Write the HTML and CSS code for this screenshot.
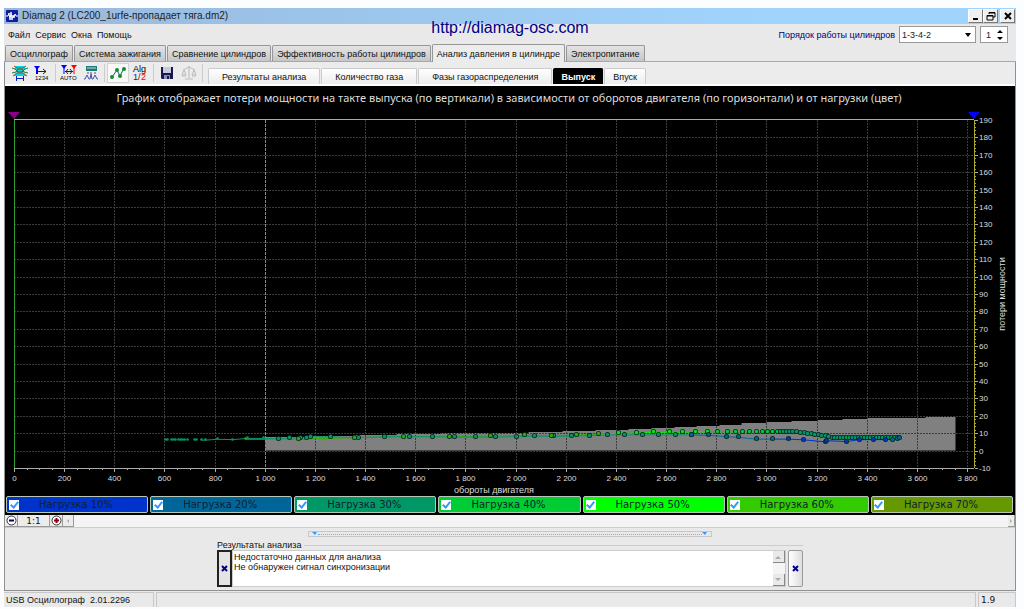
FILE: index.html
```html
<!DOCTYPE html>
<html lang="ru">
<head>
    <meta charset="utf-8">
    <title>Diamag 2</title>
    <link rel="stylesheet" href="styles.css">
</head>
<body>
    <div class="window">
        <header class="titlebar">
            <svg class="app-icon" width="12" height="12" viewBox="0 0 12 12">
                <rect width="12" height="12" rx="1" fill="#10209a"/>
                <path d="M0 6h2l1-3 1 7 1-8 1 8 1-5 1 3 1-4 1 2h2" fill="none" stroke="#fff" stroke-width="1"/>
            </svg>
            <span class="title">Diamag 2 (LC200_1urfe-пропадает тяга.dm2)</span>
            <div class="win-buttons">
                <button aria-label="Свернуть"><svg width="10" height="10"><path d="M2 8h5" stroke="#000" stroke-width="2"/></svg></button>
                <button aria-label="Восстановить"><svg width="10" height="10"><path d="M3 3V1.500h6V6H7M3 2h6M1 4.500h6V9H1z M1 5h6" fill="none" stroke="#000"/></svg></button>
                <button class="close" aria-label="Закрыть"><svg width="10" height="10"><path d="M2 2l6 6M8 2l-6 6" stroke="#000" stroke-width="2"/></svg></button>
            </div>
            <a class="site" href="http://diamag-osc.com">http://diamag-osc.com</a>
        </header>

        <div class="menu-row">
            <nav class="menu">
                <button>Файл</button>
                <button>Сервис</button>
                <button>Окна</button>
                <button>Помощь</button>
            </nav>
            <div class="order">
                <label for="order">Порядок работы цилиндров</label>
                <span class="select-box">
                    <select id="order"><option>1-3-4-2</option></select>
                    <svg width="6" height="4"><path d="M0 0h6L3 4z"/></svg>
                </span>
                <span class="spin-box">
                    <input type="text" value="1" aria-label="Номер цилиндра">
                    <svg width="8" height="12"><path d="M1 4h6L4 1zM1 8h6L4 11z"/></svg>
                </span>
            </div>
        </div>

        <nav class="tabs">
            <button>Осциллограф</button>
            <button>Система зажигания</button>
            <button>Сравнение цилиндров</button>
            <button>Эффективность работы цилиндров</button>
            <button class="active">Анализ давления в цилиндре</button>
            <button>Электропитание</button>
        </nav>

        <main class="page">
            <div class="toolbar">
                <button aria-label="Развёртка">
                    <svg width="16" height="16" viewBox="0 0 16 16">
                        <path d="M3 1h10v3l-2 3 4 4H1l4-4-2-3z" fill="#00d8e0"/>
                        <path d="M0 3l3 1 3 3h4l3-3 3-1M0 8l4-1 2-3h4l2 3 4 1" fill="none" stroke="#207048"/>
                        <path d="M1 11l4-3h6l4 3M2 1l3 2h6l3-2" fill="none" stroke="#d04020"/>
                        <path d="M4 13.500h8M4.500 11v5M11.500 11v5" stroke="#0020c0"/>
                    </svg>
                </button>
                <button aria-label="Маркер 1234">
                    <svg width="16" height="16" viewBox="0 0 16 16">
                        <path d="M0 1h6L3 5z" fill="#00f"/><path d="M3 2v7" stroke="#00f" stroke-width="2"/>
                        <path d="M4 6.500h8M9 4l3 2.500L9 9" fill="none" stroke="#222"/>
                        <text x="1" y="15" font-size="6">1234</text>
                    </svg>
                </button>
                <i class="sep"></i>
                <button aria-label="Авто">
                    <svg width="18" height="16" viewBox="0 0 18 16">
                        <path d="M1 0h6L4 4z" fill="#00f"/><path d="M4 1v8" stroke="#00f"/>
                        <path d="M11 0h6l-3 4z" fill="#f00"/><path d="M14 1v8" stroke="#f00"/>
                        <path d="M5 6.500h8M8 4L6 6.500 8 9M10 4l2 2.500L10 9" fill="none" stroke="#222"/>
                        <text x="0" y="15" font-size="6">AUTO</text>
                    </svg>
                </button>
                <button aria-label="Фильтр">
                    <svg width="16" height="16" viewBox="0 0 16 16">
                        <rect x="3" y="1" width="11" height="5" fill="#207878"/>
                        <path d="M4 3h9" stroke="#b8e0e0"/>
                        <path d="M5 7v2M8 7v2M12 7v2" stroke="#555"/>
                        <path d="M1 14h1l2-4 2 4h1l1-5 1 5h1l2-4 2 4h1" fill="none" stroke="#4050b0"/>
                    </svg>
                </button>
                <i class="sep"></i>
                <button class="pressed" aria-label="Точки">
                    <svg width="16" height="16" viewBox="0 0 16 16">
                        <path d="M2 12l5-7 3 6 4-8" fill="none" stroke="#2050a0"/>
                        <g fill="#109020"><circle cx="2" cy="12" r="2"/><circle cx="7" cy="5" r="2"/><circle cx="10" cy="11" r="2"/><circle cx="14" cy="4" r="2"/></g>
                    </svg>
                </button>
                <button aria-label="Алгоритм">
                    <svg width="18" height="18" viewBox="0 0 18 18">
                        <text x="2" y="8" font-size="9">Alg</text>
                        <text x="2" y="16" font-size="9" fill="#1020b0">1</text>
                        <text x="7" y="16" font-size="9" fill="#800">/</text>
                        <text x="10" y="16" font-size="9" fill="#f00">2</text>
                    </svg>
                </button>
                <i class="sep"></i>
                <button aria-label="Сохранить">
                    <svg width="16" height="16" viewBox="0 0 16 16">
                        <path d="M2 2h12v12H3l-1-1z" fill="#18184c"/>
                        <path d="M4 2h8v6H4z" fill="#c8ccd8"/><path d="M5 10h6v4H5z" fill="#8890b8"/><path d="M8 11h2v3H8z" fill="#18184c"/>
                    </svg>
                </button>
                <button aria-label="Весы" disabled>
                    <svg width="16" height="16" viewBox="0 0 16 16">
                        <path d="M8 1v12M4 14h8M2 5l6-3 6 3M3 5l-2 5h4zM13 5l-2 5h4zM1 11h4M11 11h4" fill="none" stroke="#bbb"/>
                    </svg>
                </button>
                <i class="sep"></i>
                <nav class="subtabs">
                    <button>Результаты анализа</button>
                    <button>Количество газа</button>
                    <button>Фазы газораспределения</button>
                    <button class="active">Выпуск</button>
                    <button class="short">Впуск</button>
                </nav>
            </div>

            <section class="chart">
                <svg id="plot" viewBox="0 0 1010 410"></svg>
                <div class="loads" id="loads"></div>
            </section>

            <div class="zoom-row">
                <button class="zoom" aria-label="Уменьшить"><svg width="11" height="11"><circle cx="5.500" cy="5.500" r="4.500" fill="#fff" stroke="#333"/><path d="M3 5.500h5" stroke="#00007a" stroke-width="2"/></svg></button>
                <button class="scale">1:1</button>
                <button class="zoom" aria-label="Увеличить"><svg width="11" height="11"><circle cx="5.500" cy="5.500" r="4.500" fill="#fff" stroke="#333"/><path d="M3 5.500h5M5.500 3v5" stroke="#900010" stroke-width="2"/></svg></button>
                <button class="arrow" aria-label="Влево"><svg width="4" height="6"><path d="M3 1v4L1 3z" fill="#aaa"/></svg></button>
                <div class="track"></div>
                <button class="arrow right" aria-label="Вправо"><svg width="4" height="6"><path d="M1 1v4l2-2z" fill="#aaa"/></svg></button>
            </div>

            <div class="splitter">
                <svg width="6" height="4"><path d="M0 0h5L3 3z" fill="#39f"/></svg>
                <span class="dots"></span>
                <svg width="6" height="4"><path d="M0 0h5L3 3z" fill="#39f"/></svg>
            </div>

            <fieldset class="results">
                <legend>Результаты анализа</legend>
                <div class="results-row">
                    <button class="clear focused" aria-label="Очистить"><svg width="7" height="7"><path d="M1 1l5 5M6 1L1 6" stroke="#00008b" stroke-width="2"/></svg></button>
                    <div class="memo">
                        <textarea aria-label="Результаты анализа" readonly>Недостаточно данных для анализа
Не обнаружен сигнал синхронизации</textarea>
                        <div class="vscroll">
                            <button aria-label="Вверх"><svg width="6" height="4"><path d="M0 4h6L3 1z" fill="#aaa"/></svg></button>
                            <button aria-label="Вниз"><svg width="6" height="4"><path d="M0 0h6L3 3z" fill="#aaa"/></svg></button>
                        </div>
                    </div>
                    <button class="clear" aria-label="Закрыть результаты"><svg width="7" height="7"><path d="M1 1l5 5M6 1L1 6" stroke="#00008b" stroke-width="2"/></svg></button>
                </div>
            </fieldset>
        </main>

        <footer class="status">
            <span class="device">USB Осциллограф&nbsp; 2.01.2296</span>
            <span class="message"></span>
            <span class="version">1.9</span>
        </footer>
    </div>
    <script src="app.js"></script>
</body>
</html>
```
FILE: styles.css
```css
* {
    box-sizing: border-box;
}
body {
    margin: 0;
    background: #fcfdff;
    font-family: "Liberation Sans", Arial, sans-serif;
    font-size: 9px;
    line-height: 12px;
    color: #111;
}
button, input, select, textarea {
    font: inherit;
    color: inherit;
    margin: 0;
    padding: 0;
    border: 0;
    border-radius: 0;
    background: none;
}
svg {
    display: block;
}
.window {
    margin: 8px 8px 0 4px;
    background: #e9e9e9;
}

/* title bar */
.titlebar {
    position: relative;
    display: flex;
    align-items: center;
    gap: 4px;
    height: 16px;
    padding: 0 1px 0 2px;
    background: linear-gradient(90deg, #99b8db, #a0d4fd 75%);
}
.title {
    flex: 1;
    font-size: 10px;
    color: #222;
}
.win-buttons {
    display: flex;
}
.win-buttons button {
    display: grid;
    place-items: center;
    width: 15px;
    height: 14px;
    background: #f0f0f0;
    border: 1px solid;
    border-color: #fff #777 #777 #fff;
}
.win-buttons .close {
    margin-left: 2px;
}
.site {
    position: absolute;
    left: 50%;
    top: 11px;
    transform: translateX(-50%);
    font-size: 16px;
    line-height: 18px;
    color: #00008b;
    text-decoration: none;
}

/* menu */
.menu-row {
    display: flex;
    justify-content: space-between;
    height: 20px;
    padding: 1px 8px 0 4px;
}
.menu {
    display: flex;
    align-items: center;
    gap: 5px;
}
.order {
    display: flex;
    align-items: center;
    gap: 4px;
    color: #00007a;
}
.select-box, .spin-box {
    display: flex;
    align-items: center;
    height: 17px;
    background: #fff;
    border: 1px solid #999;
    color: #222;
}
.select-box {
    width: 77px;
    padding: 0 4px 0 2px;
}
.select-box select {
    flex: 1;
    appearance: none;
}
.spin-box {
    width: 28px;
    padding: 0 3px 0 5px;
}
.spin-box input {
    flex: 1;
    min-width: 0;
}

/* tabs */
.tabs {
    display: flex;
    align-items: flex-end;
    height: 18px;
    padding-left: 1px;
    gap: 1px;
    border-bottom: 1px solid #a8a8a8;
}
.tabs button {
    height: 16px;
    padding: 0 4px;
    white-space: nowrap;
    background: linear-gradient(#e4e4e4, #c6c6c6);
    border: 1px solid #969696;
    border-bottom: 0;
    border-radius: 2px 2px 0 0;
}
.tabs .active {
    height: 18px;
    margin-bottom: -1px;
    background: #ececec;
}
.page {
    border: 1px solid #909090;
    border-top: 0;
}
.toolbar {
    display: flex;
    align-items: center;
    height: 24px;
    padding-left: 4px;
    background: #ececec;
    border-bottom: 2px solid #fff;
}
.toolbar > button {
    display: grid;
    place-items: center;
    width: 22px;
    height: 20px;
}
.toolbar > .pressed {
    background: #f8f8f8;
    border: 1px solid #d4d4d4;
}
.sep {
    width: 1px;
    height: 18px;
    margin: 0 2px;
    background: #ccc;
}
.subtabs {
    display: flex;
    align-self: flex-end;
    gap: 1px;
    margin-left: 3px;
}
.subtabs button {
    height: 16px;
    padding: 0 13px;
    background: linear-gradient(#fff, #ececec);
    border: 1px solid #ccc;
    border-bottom: 0;
    border-radius: 2px 2px 0 0;
}
.subtabs .active {
    padding: 0 7px;
    background: #000;
    border-color: #000;
    color: #fff;
    font-weight: bold;
}
.subtabs .short {
    padding: 0 8px;
}

/* chart */
.chart {
    background: #000;
    padding-bottom: 2px;
}
#plot {
    width: 100%;
    height: auto;
    font-size: 8px;
    fill: #ddd;
}
#plot .heading {
    font-family: "Noto Sans", sans-serif;
    font-size: 11px;
}
#plot .caption {
    font-size: 9px;
}
#plot .grid {
    stroke: #3c3c3c;
    stroke-dasharray: 2 1;
}
#plot .mark {
    stroke: #888;
    stroke-dasharray: 3 1;
}
#plot .axis {
    stroke: #aaa;
}
#plot .axis-y {
    stroke: #a8a830;
}
#plot .axis-zero {
    stroke: #30a030;
}
#plot .band {
    fill: #808080;
}
.loads {
    display: grid;
    grid-template-columns: repeat(7, 1fr);
    gap: 2px;
    padding: 0 2px 0 1px;
}
.loads label {
    display: flex;
    align-items: center;
    height: 17px;
    padding: 0 2px;
    border: 1px solid #b8c8b8;
    border-radius: 2px;
    font-family: "DejaVu Sans", sans-serif;
    font-size: 10px;
    color: #102030;
}
.loads span {
    flex: 1;
    padding-right: 12px;
    text-align: center;
}
.loads input {
    appearance: none;
    display: grid;
    place-items: center;
    width: 10px;
    height: 10px;
    background: #fff;
}
.loads input:checked::before {
    content: "";
    width: 3px;
    height: 6px;
    margin-top: -2px;
    border: solid #39f;
    border-width: 0 2px 2px 0;
    transform: rotate(40deg);
}

/* zoom and horizontal scroll */
.zoom-row {
    display: flex;
    height: 13px;
    background: #f4f4f4;
    border-bottom: 1px solid #ccc;
}
.zoom, .scale, .arrow {
    display: grid;
    place-items: center;
    height: 12px;
    background: #ececec;
    border-right: 1px solid #999;
    border-bottom: 1px solid #999;
}
.zoom {
    width: 13px;
}
.scale {
    width: 32px;
    font-family: "DejaVu Sans", sans-serif;
}
.arrow {
    width: 11px;
}
.arrow.right {
    width: 7px;
}
.track {
    flex: 1;
}
.splitter {
    display: flex;
    align-items: center;
    width: 40%;
    height: 6px;
    margin: 3px auto;
    padding: 0 3px;
    border: 1px solid #c8c8c8;
}
.dots {
    flex: 1;
    border-top: 1px dotted #6ab4ff;
}

/* results */
.results {
    width: 58%;
    min-width: 0;
    margin: 0 auto 3px;
    padding: 0;
    border: 0;
    border-top: 1px solid #ccc;
}
.results legend {
    padding: 0 3px 0 0;
    line-height: 10px;
}
.results-row {
    display: flex;
    height: 37px;
}
.clear {
    display: grid;
    place-items: center;
    width: 15px;
    background: linear-gradient(90deg, #fff, #ddd);
    border: 1px solid #999;
    border-radius: 2px;
}
.clear.focused {
    border: 2px solid #222;
    border-radius: 0;
    background: #e4e4e4;
}
.memo {
    flex: 1;
    display: flex;
    margin-right: 2px;
    background: #fff;
    border: 1px solid #ccc;
}
.memo textarea {
    flex: 1;
    padding: 1px;
    line-height: 10px;
    resize: none;
    outline: none;
    overflow: hidden;
}
.vscroll {
    display: flex;
    flex-direction: column;
    justify-content: space-between;
    background: #f4f4f4;
}
.vscroll button {
    display: grid;
    place-items: center;
    width: 12px;
    height: 12px;
    background: #e9e9e9;
    border-right: 1px solid #888;
    border-bottom: 1px solid #888;
}

/* status bar */
.status {
    display: flex;
    gap: 2px;
    height: 16px;
    padding-top: 1px;
    line-height: 15px;
}
.status span {
    padding-left: 2px;
    border: 1px solid #c8c8c8;
    border-width: 1px 1px 0 0;
}
.status .device {
    width: 150px;
}
.status .message {
    flex: 1;
    border-left-width: 1px;
}
.status .version {
    width: 38px;
    border-left-width: 1px;
    font-family: "DejaVu Sans", sans-serif;
}
```
FILE: app.js
```js
const LEFT = 9, TOP = 34, RIGHT = 969, BOTTOM = 382;
const px = rpm => Math.round(LEFT + rpm * 0.2508) + 0.5;
const py = loss => BOTTOM - (loss + 10) * 1.74;

const out = [];
const line = (cls, x1, y1, x2, y2) =>
    out.push(`<line class="${cls}" x1="${x1}" y1="${y1}" x2="${x2}" y2="${y2}"/>`);
const text = (x, y, str, extra = '') =>
    out.push(`<text x="${x}" y="${y}" ${extra}>${str}</text>`);

text(504, 16, 'График отображает потери мощности на такте выпуска (по вертикали) в зависимости от оборотов двигателя (по горизонтали) и от нагрузки (цвет)', 'class="heading" text-anchor="middle"');

// allowed range, rises in small steps
let band = `M${px(1000)} ${py(0)}V${py(7)}`;
const edge = [[1000, 7], [1700, 9.5], [2050, 10], [2450, 12], [2900, 15], [3400, 18], [3750, 19.5]];
for (let i = 1; i < edge.length; i++) {
    const [x0, y0] = edge[i - 1], [x1, y1] = edge[i];
    const steps = Math.max(1, Math.round((y1 - y0) / 0.6));
    for (let s = 1; s <= steps; s++) {
        band += `V${Math.round(py(y0 + (y1 - y0) * s / steps))}H${px(x0 + (x1 - x0) * s / steps)}`;
    }
}
out.push(`<path class="band" d="${band}V${py(0)}z"/>`);

for (let rpm = 200; rpm <= 3800; rpm += 200) {
    line(rpm === 1000 ? 'mark' : 'grid', px(rpm), TOP, px(rpm), BOTTOM);
}
for (let v = 0; v < 190; v += 10) {
    const y = Math.round(py(v)) + 0.5;
    line('grid', LEFT, y, RIGHT, y);
}

// axes
line('axis', LEFT, TOP - 0.5, RIGHT, TOP - 0.5);
line('axis', LEFT, BOTTOM + 0.5, RIGHT, BOTTOM + 0.5);
line('axis-zero', LEFT + 0.5, TOP, LEFT + 0.5, BOTTOM);
line('axis-y', RIGHT + 0.5, TOP, RIGHT + 0.5, BOTTOM);
for (let rpm = 0; rpm <= 3800; rpm += 50) {
    line('axis', px(rpm), BOTTOM, px(rpm), BOTTOM + (rpm % 200 ? 2 : 4));
}
for (let rpm = 0; rpm <= 3800; rpm += 200) {
    const label = rpm < 1000 ? rpm : Math.floor(rpm / 1000) + ' ' + String(rpm % 1000).padStart(3, '0');
    text(px(rpm), 395, label, 'text-anchor="middle"');
}
for (let v = -10; v <= 190; v += 2) {
    const y = Math.round(py(v)) + 0.5;
    line(v % 10 ? 'axis-y' : 'axis', RIGHT + 1, y, RIGHT + (v % 10 ? 2 : 4), y);
    if (v % 10 === 0) text(RIGHT + 5, y + 2, v);
}
text(489, 407, 'обороты двигателя', 'class="caption" text-anchor="middle"');
text(0, 0, 'потери мощности', 'class="caption" text-anchor="middle" transform="translate(1000 208) rotate(-90)"');
out.push(`<path d="M3 26h12l-6 7z" fill="#808"/><path d="M963 26h12l-6 7z" fill="#00f"/>`);

const BLUE = '#0033cc', SEA = '#006699', TEAL = '#009966', GREEN = '#33aa00', LIME = '#00ee00';
const low = [
    [2700, 9, SEA], [2766, 8.8, SEA], [2838, 8, SEA], [2886, 7.6, SEA], [2958, 6.6, SEA], [3022, 6.6, SEA],
    [3085, 6.6, BLUE], [3145, 6.2, BLUE], [3233, 5, BLUE], [3237, 5.7, BLUE], [3317, 5.2, BLUE],
    [3369, 6.3, BLUE], [3424, 6.3, BLUE], [3472, 6.3, BLUE], [3500, 6.3, SEA], [3520, 6.6, SEA], [3528, 7, SEA]
];
const mid = [
    [601, 6], [609, 6], [625, 6], [633, 6], [641, 6], [653, 6], [661, 6], [669, 6], [677, 6], [689, 6],
    [717, 6], [725, 6], [745, 6], [761, 6], [808, 6.5], [868, 6.3], [928, 7], [992, 7], [1052, 6.8],
    [1096, 7.3], [1140, 7.3], [1163, 7.3], [1180, 8], [1259, 8], [1370, 7.4], [1474, 8], [1574, 8],
    [1666, 8], [1753, 7.8], [1837, 7.8], [1917, 7.8], [2001, 8], [2073, 8.3], [2148, 8.2], [2220, 8.3],
    [2292, 8.6], [2364, 9], [2432, 9], [2503, 9], [2567, 9], [2635, 9], [2700, 9]
].map(p => [...p, TEAL]);
const high = [
    [920, 6.5, GREEN], [1132, 6.5, GREEN], [1355, 7.5, GREEN], [1550, 8, GREEN], [1733, 8, GREEN],
    [1897, 8.3, GREEN], [2033, 8.8, GREEN], [2140, 8.6, GREEN], [2240, 9, GREEN], [2328, 9.5, GREEN],
    [2408, 10, LIME], [2479, 10, LIME], [2547, 10.5, LIME], [2611, 10.5, LIME], [2663, 10.5, LIME],
    [2715, 10.8, LIME], [2762, 10.8, LIME], [2802, 10.8, '#0c3'], [2842, 10.8, '#0c3'], [2874, 10.8, '#0c3'],
    [2902, 10.8, '#0c3'], [2930, 10.8, '#0c3'], [2958, 10.8, '#0c3'], [2982, 10.8, '#0c3'], [3004, 10.8, '#0c3'],
    [3024, 10.8, '#0c3'], [3042, 10.8, '#0c3']
];
for (let rpm = 3056; rpm <= 3110; rpm += 12) high.push([rpm, 10.8, TEAL]);
for (let rpm = 3120; rpm < 3270; rpm += 14) high.push([rpm, 10.6 - (rpm - 3120) * 0.022, TEAL]);
for (let rpm = 3270; rpm <= 3525; rpm += 12) high.push([rpm, 7.2, TEAL]);

for (const points of [high, mid, low]) {
    for (let i = 1; i < points.length; i++) {
        const [a, b] = [points[i - 1], points[i]];
        if (b[0] < 760) continue;
        out.push(`<line x1="${px(a[0])}" y1="${py(a[1])}" x2="${px(b[0])}" y2="${py(b[1])}" stroke="${b[2]}"/>`);
    }
}
// dark rim under each bright dot
for (const [rpm, v, color] of [...mid, ...high, ...low]) {
    const x = px(rpm), y = Math.round(py(v)) - 0.5;
    if (rpm >= 1000) out.push(`<circle cx="${x}" cy="${y}" r="2.5" fill="#002a20"/>`);
    out.push(`<circle cx="${x}" cy="${y}" r="${rpm < 1000 ? 1.3 : 1.7}" fill="${color}"/>`);
}
document.getElementById('plot').innerHTML = out.join('');

const loads = [[10, '#0033cc'], [20, '#006699'], [30, '#009966'], [40, '#00cc33'], [50, '#00ff00'], [60, '#33cc00'], [70, '#669900']];
document.getElementById('loads').innerHTML = loads.map(([n, color]) =>
    `<label style="background: ${color}"><input type="checkbox" checked><span>Нагрузка ${n}%</span></label>`).join('');
```
